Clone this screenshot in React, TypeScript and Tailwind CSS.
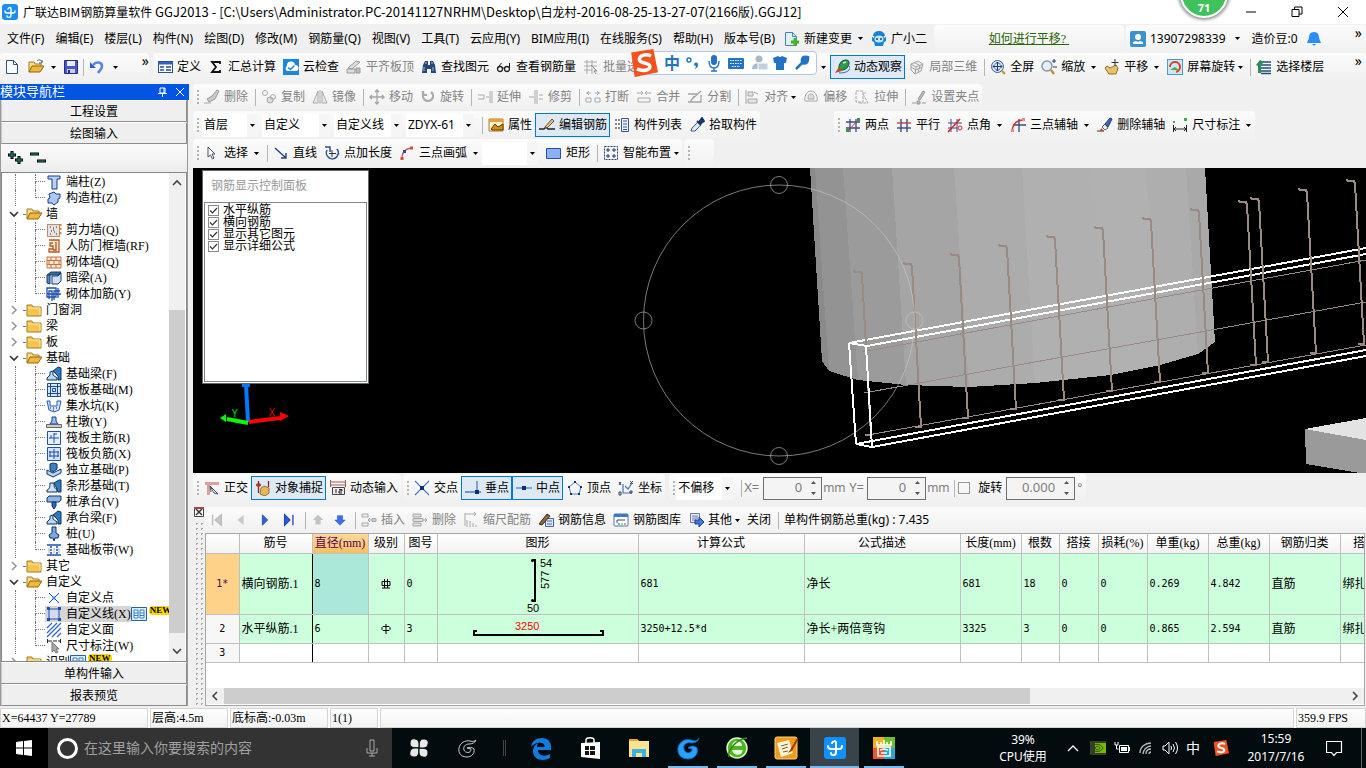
import { ReactNode } from 'react';
import clsx from 'clsx';

const folder = (
  <>
    <path d="M1 3h5l1 2h8v9H1z" fill="#f3c64f" stroke="#a97a1c" />
    <path d="M2 6h12v7" fill="none" stroke="#fdebab" />
  </>
);
const folderOpen = (
  <>
    <path d="M1 13V3h5l1 2h6v3" fill="#f7dc8a" stroke="#a97a1c" />
    <path d="M1 13l3-6h12l-4 6z" fill="#f0b93a" stroke="#8f6412" />
  </>
);

const glyphs: Record<string, ReactNode> = {
  app: (
    <>
      <rect width="16" height="16" rx="3" fill="#1b8ff0" />
      <path
        d="M3 7c0 2 1 2 2 2h6c1 0 2 0 2-2M6 5c1-2 3-2 3 0v6c0 3-4 3-4 1"
        fill="none"
        stroke="#fff"
        strokeWidth="1.4"
        strokeLinecap="round"
      />
    </>
  ),
  newFile: <path d="M2.500 1.500h7l4 4v9h-11zM9.500 1.500v4h4" fill="#fff" stroke="#33517f" />,
  open: (
    <>
      {folderOpen}
      <path d="M9 2c2-2 4-1 5 1M14 1v3h-3" fill="none" stroke="#4a5f80" />
    </>
  ),
  folder,
  folderOpen,
  save: (
    <>
      <path d="M1.500 1.500h13v13h-13z" fill="#4a56c4" stroke="#262f85" />
      <path d="M4 2h8v5H4z" fill="#e9edff" />
      <path d="M4 10h8v4H4z" fill="#c9cfe8" />
      <path d="M5 11h2v3H5z" fill="#262f85" />
    </>
  ),
  undo: (
    <>
      <path d="M1 3v6h6z" fill="#2f5fd0" />
      <path d="M4 6c3-4 9-3 9 1 0 3-2 4-4 7" fill="none" stroke="#5b86e0" strokeWidth="2.600" />
    </>
  ),
  define: (
    <>
      <rect x="1.500" y="2.500" width="14" height="11" fill="#fff" stroke="#2b4f8e" />
      <path d="M1 3h15v2.500H1z" fill="#2f63c0" />
      <path d="M3 8h4M3 11h4M9 8h5M9 11h5" stroke="#2b4f8e" strokeWidth="1.500" />
    </>
  ),
  sigma: <path d="M12 5V3H4l4 5-4 5h8v-2" fill="none" stroke="#111" strokeWidth="1.800" />,
  cloud: (
    <>
      <rect width="16" height="16" fill="#1b87dc" />
      <path d="M4 12a3 3 0 0 1 0-5 4 4 0 0 1 8-1 3 3 0 0 1 1 6z" fill="#fff" />
      <path d="M5 8.500l2.500 2 4-4" fill="none" stroke="#1b87dc" strokeWidth="1.500" />
    </>
  ),
  alignTop: (
    <>
      <path d="M2 9l8-7 4 1-8 7zM1 10h8v4H1z" fill="#ddd" stroke="#9a9a9a" />
      <path d="M10 9h4v5h-4z" fill="#bbb" stroke="#999" />
    </>
  ),
  binoc: (
    <>
      <path d="M2 6l2-4h3v4h2V2h3l2 4 1 8h-5v-4H6v4H1z" fill="#27467c" />
      <path d="M3 8v4M12 8v4M5 3v2M11 3v2" stroke="#9dbbe8" />
    </>
  ),
  glasses: (
    <>
      <circle cx="4" cy="10" r="2.500" fill="none" stroke="#222" strokeWidth="1.300" />
      <circle cx="11" cy="10" r="2.500" fill="none" stroke="#222" strokeWidth="1.300" />
      <path d="M1.500 9l4-5M13.500 10V4M6 9h3" stroke="#222" fill="none" />
    </>
  ),
  gridPick: (
    <>
      <path d="M1 3h13M1 7h13M1 11h8M4 1v14M9 1v14" stroke="#aaa" />
      <path d="M8 6l6 6h-3l2 3" stroke="#888" fill="#eee" />
    </>
  ),
  orbit: (
    <>
      <ellipse cx="10" cy="6" rx="6" ry="4" transform="rotate(-45 10 6)" fill="#2f9a4a" stroke="#12602a" />
      <path d="M9 4l3-1" stroke="#c6f5cc" strokeWidth="1.500" />
      <path d="M1 14l4-6 3 4z" fill="#c2452c" />
      <path d="M5 14a10 5 0 0 0 10-7" fill="none" stroke="#3068c8" />
    </>
  ),
  cube: <path d="M2 5l7-3 5 3-2 7-6 3-4-4zM2 5l5 3 7-3M7 8l-1 7M5 3.500l6 3-2 7M2 8l5 3 6-3" fill="#eee" stroke="#a3a3a3" />,
  fullView: (
    <>
      <circle cx="7.500" cy="7.500" r="6" fill="#dce8f8" stroke="#3d5f96" />
      <path d="M3 7.500h9M7.500 3v9M5 5.500L3 7.500l2 2M10 5.500l2 2-2 2M5.500 5l2-2 2 2M5.500 10l2 2 2-2" fill="none" stroke="#1e3c77" />
      <path d="M12 12l3 3" stroke="#c98d25" strokeWidth="2" />
    </>
  ),
  zoom: (
    <>
      <circle cx="6" cy="7" r="5" fill="#e7effa" stroke="#8595ad" strokeWidth="1.400" />
      <path d="M10 11l3 4" stroke="#c98d25" strokeWidth="2.400" />
      <path d="M11 2h4M13 0v4M12 8h4" stroke="#1e3c77" />
    </>
  ),
  hand: (
    <>
      <path d="M1 9l2-2 3 2 6-3 2 3-2 6H5z" fill="#e9c06b" stroke="#97702a" />
      <path d="M11 0v7M7.500 3.500h7" stroke="#333" />
    </>
  ),
  rotateView: (
    <>
      <rect x=".500" y=".500" width="15" height="15" fill="#cbe8f5" stroke="#4d9cc4" />
      <path d="M3 8a5 5 0 1 1 6 5" fill="none" stroke="#e03a2d" strokeWidth="2" />
      <path d="M3 11l5-3 4 3z" fill="#5aa83a" />
    </>
  ),
  floors: (
    <>
      <path d="M3 3h12M5 6h10M5 9h10M5 12h10M5 14.500h10" stroke="#1f4f7c" strokeWidth="1.400" />
      <path d="M0 6l4-5 4 2-3 3v8H2V7z" fill="#2c8b57" />
    </>
  ),
  brush: (
    <>
      <path d="M0 14h7" stroke="#aaa" />
      <path d="M5 13L3 10l5-3 5-6 2 1-4 8z" fill="#c9c9c9" stroke="#9b9b9b" />
    </>
  ),
  copy: (
    <>
      <circle cx="4" cy="4" r="2.500" fill="none" stroke="#aaa" />
      <circle cx="9" cy="11" r="3" fill="#ddd" stroke="#a5a5a5" />
      <circle cx="12" cy="8" r="2.500" fill="none" stroke="#aaa" />
    </>
  ),
  mirror: <path d="M6 2v12H1zM10 2v12h5zM8 1v14" fill="#e9e9e9" stroke="#aaa" />,
  move: <path d="M8 1v14M1 8h14M6 3l2-2 2 2M6 13l2 2 2-2M3 6L1 8l2 2M13 6l2 2-2 2" fill="none" stroke="#a5a5a5" strokeWidth="1.300" />,
  rotate: <path d="M4 4a5 5 0 1 0 7-1M3 2v4h4" fill="none" stroke="#aaa" strokeWidth="2.200" />,
  extend: <path d="M1 6h6M1 10h6M7 6v4M13 2v12M9 8h3M15 2v12" fill="none" stroke="#aaa" />,
  trim: <path d="M7 1v14M9 1v14M1 8h5M11 6h4M11 10h4" fill="none" stroke="#aaa" />,
  split: <path d="M1 4h5M10 4h5M4 2L2 4l2 2M12 2l2 2-2 2M1 9h5v4H1zM10 9h5v4h-5z" fill="none" stroke="#aaa" />,
  merge: <path d="M1 4h5M10 4h5M5 2l2 2-2 2M11 2L9 4l2 2M2 9h12v4H2z" fill="none" stroke="#aaa" />,
  cut: <path d="M1 5h9M1 13h13V6M4 11l10-9M3 13L7 7" fill="none" stroke="#a5a5a5" strokeWidth="1.300" />,
  align: <path d="M2 1v14M4 3h5v4H4zM4 10h9v4H4zM10 3l4 2" fill="#e4e4e4" stroke="#a5a5a5" />,
  offset: (
    <>
      <path d="M8 2c5 0 7 7 6 10H2C1 9 3 2 8 2z" fill="none" stroke="#a5a5a5" />
      <path d="M8 5c3 0 3 3 3 5H5c0-2 0-5 3-5z" fill="#ddd" stroke="#a5a5a5" />
    </>
  ),
  stretch: <path d="M2 2h7v11H2zM9 5l5 9H4M11 3v2" fill="none" stroke="#aaa" strokeDasharray="3 1" />,
  grip: <path d="M1 14h4M11 14h4M6 12h3v3H6zM7 10l5-8 2 1-5 8z" fill="#bbb" stroke="#999" />,
  props: (
    <>
      <path d="M1 2h14v12H1z" fill="#fff4cf" stroke="#b27a1f" />
      <path d="M1 2h14v3H1z" fill="#e7a13a" />
      <path d="M3 12l4-5 3 3 5-3v6H4z" fill="#d98c1a" stroke="#5a3a08" />
    </>
  ),
  editBar: (
    <>
      <path d="M0 12h5l2-2 2 2h7" fill="none" stroke="#223" strokeWidth="1.500" />
      <path d="M6 10l7-8 2 2-7 7z" fill="#e2c08b" stroke="#735324" />
    </>
  ),
  compList: (
    <>
      <path d="M7.500 1.500h7v13h-7z" fill="#eef3fb" stroke="#365a96" />
      <path d="M9 4h4M9 7h4M9 10h4M9 12.500h4" stroke="#365a96" />
      <path d="M1 3h2M4 3h2M1 7h2M4 7h2M1 11h2M4 11h2" stroke="#888" strokeWidth="2" />
    </>
  ),
  dropper: (
    <>
      <path d="M2 14l1-3 6-6 3 3-6 6z" fill="#dceaf8" stroke="#46607e" />
      <path d="M8 4l4 4M10 5l3-4 2 3-4 3z" stroke="#16325f" fill="#1d4686" strokeWidth="1.800" />
    </>
  ),
  twoPt: (
    <>
      <path d="M5 2v13M11 2v13M1 5h14M1 11h14" stroke="#3b4a86" strokeWidth="1.300" />
      <path d="M3 14L13 3" stroke="#c0392b" />
      <path d="M12 1h3v3h-3zM1 12h3v3H1z" fill="#2d9d3c" />
    </>
  ),
  parallel: (
    <>
      <path d="M5 2v13M11 2v13" stroke="#3b4a86" strokeWidth="1.400" />
      <path d="M1 6h14" stroke="#b44" strokeWidth="1.400" />
      <path d="M1 11h14" stroke="#3b4a86" strokeWidth="1.400" />
    </>
  ),
  ptAngle: (
    <>
      <path d="M4 2v13M10 2v13M1 6h14M1 11h9" stroke="#3b4a86" />
      <path d="M1 15L13 2" stroke="#d22" strokeWidth="1.500" />
      <circle cx="13" cy="11" r="2" stroke="#d22" fill="none" />
    </>
  ),
  arcAxis: (
    <>
      <path d="M9 2v13M3 8h13" stroke="#3b4a86" strokeWidth="1.300" />
      <path d="M2 14C3 6 7 3 13 3" stroke="#c33" strokeWidth="1.500" fill="none" />
      <path d="M1 12h3v3H1zM12 1h3v3h-3z" fill="#e88" />
    </>
  ),
  eraser: (
    <>
      <path d="M0 14h7" stroke="#333" />
      <path d="M5 10l3 3 3-2-3-4z" fill="#e9edf5" stroke="#667" />
      <path d="M8 7l5-6 2 1-4 8z" fill="#3c64c0" stroke="#223b7a" />
      <path d="M4 11l3 3-4 0z" fill="#c0453a" />
    </>
  ),
  dim: (
    <>
      <path d="M1.500 8v7M14.500 8v7M2 12h12M4 10l-2 2 2 2M12 10l2 2-2 2" stroke="#222" fill="none" />
      <path d="M1 4h2v2H1zM12 1h3v3h-3z" fill="#3fae49" />
    </>
  ),
  arrow: <path d="M4 2v10l2.500-2 2 4 1.500-1-2-4h3z" fill="#fff" stroke="#42526e" />,
  line: <path d="M2 3l11 10M13 8v5H8" fill="none" stroke="#23457f" strokeWidth="1.400" />,
  addLen: (
    <>
      <path d="M3 5a6 6 0 1 0 10-1M1 2h5v5M13 10l2-2" fill="none" stroke="#2b4f8e" strokeWidth="1.500" />
      <path d="M8 5v7M5 8.500h7" stroke="#333" />
    </>
  ),
  arc: (
    <>
      <path d="M3 13C3 7 6 4 12 3" stroke="#c4564a" fill="none" strokeWidth="1.300" />
      <path d="M1.500 12h3v3h-3zM11 1.500h3v3h-3z" fill="#d84c3a" />
      <path d="M4 5h3v3H4z" fill="#2b4f8e" />
    </>
  ),
  rect: <path d="M.500 3.500h14v10H.500z" fill="#8bb0f5" stroke="#2b4fa0" />,
  smart: (
    <>
      <rect x="1.500" y="1.500" width="13" height="13" fill="none" stroke="#2b3f6e" strokeDasharray="2 1" />
      <path d="M5 3v4M3 5h4M11 3v4M9 5h4M5 9v4M3 11h4M11 9v4M9 11h4" stroke="#1e3c77" />
    </>
  ),
  ortho: (
    <>
      <path d="M1 2h14v3H6v10H3V5H1z" fill="#dba09c" />
      <path d="M6 6l8 8-4-1zM6 6l1 6" fill="#fff" stroke="#456" />
    </>
  ),
  snap: (
    <>
      <path d="M3.500 1v12M13.500 1v6M1 5h5" stroke="#7c2b22" strokeWidth="1.300" />
      <path d="M6 8l3-2 5 2v5l-4 3-5-2z" fill="#e5b95b" stroke="#97702a" />
      <circle cx="3.500" cy="5" r="2" fill="#a2392b" />
    </>
  ),
  dynIn: (
    <>
      <path d="M0 2h16M0 5h16M.500 0v7M15.500 0v7" stroke="#a2605a" strokeWidth="1.200" />
      <path d="M2.500 7.500h12v7h-12z" fill="#eee" stroke="#444" />
      <path d="M6 9v4M9 9.500h3v1.500H9v2h3" stroke="#222" fill="none" />
    </>
  ),
  cross: (
    <>
      <path d="M1 1l14 14M15 1L1 15" stroke="#4a7fc4" strokeWidth="1.200" />
      <path d="M6 6h4v4H6z" fill="#12306b" />
    </>
  ),
  perp: (
    <>
      <path d="M12 1v10M0 12h16" stroke="#4a7fc4" strokeWidth="1.300" />
      <path d="M10 10h4v4h-4z" fill="#12306b" />
    </>
  ),
  mid: (
    <>
      <path d="M0 8h16" stroke="#4a7fc4" strokeWidth="1.300" />
      <path d="M6 6h4v4H6z" fill="#12306b" />
    </>
  ),
  vertex: (
    <>
      <path d="M8 2l6 5-2 7H4L2 7z" fill="none" stroke="#4a7fc4" />
      <path d="M7 1h2v2H7zM1 6h2v2H1zM13 6h2v2h-2zM3 13h2v2H3zM11 13h2v2h-2z" fill="#12306b" />
    </>
  ),
  coord: (
    <>
      <path d="M5 4v9h9M7 6l3 3 4-6" fill="none" stroke="#3f73b8" strokeWidth="1.200" />
      <path d="M1 2l2 3M3 2L1 5M12 1l3 3M15 1l-3 3M1 12h2v3H1zM12 11h2v2h-2z" stroke="#345" fill="none" />
    </>
  ),
  first: <path d="M3 2v12M13 2L6 8l7 6z" fill="#c9c9c9" stroke="#bbb" strokeWidth="1.500" />,
  prev: <path d="M11 2L4 8l7 6z" fill="#c9c9c9" />,
  next: <path d="M5 2l6 6-6 6z" fill="#2e62dd" stroke="#1d49b5" />,
  last: <path d="M3 2l6 6-6 6zM12.500 2v12" fill="#2e62dd" stroke="#1d49b5" strokeWidth="1.500" />,
  up: <path d="M8 2l6 6h-3v5H5V8H2z" fill="#c3c3c3" />,
  down: <path d="M8 14l6-6h-3V3H5v5H2z" fill="#3a6fe8" stroke="#1d49b5" strokeWidth=".500" />,
  insert: <path d="M1 2h6v3H1zM1 11h6v3H1zM15 8H7M9 6L7 8l2 2M11 6.500h4v3h-4z" fill="#eee" stroke="#a8a8a8" />,
  remove: <path d="M1 2h8v3H1zM1 6.500h10v3H1zM1 11h8v3H1zM11 8h4M13 6l2 2-2 2" fill="#ddd" stroke="#a8a8a8" />,
  scale: <path d="M2 1v13M2 2h11M11 0l2 2-2 2M4 8v7M7 9v6M10 11v4M13 13v2" fill="none" stroke="#aaa" />,
  barInfo: (
    <>
      <path d="M7.500 6.500h8v8h-8zM9 9h5M9 12h5" fill="#dfe8f8" stroke="#44659c" />
      <path d="M1 12l8-10 3 2-8 9z" fill="#8c6b42" stroke="#3a2a14" />
    </>
  ),
  barLib: (
    <>
      <rect x="1" y="2" width="14" height="12" rx="1" fill="#fff" stroke="#4477b8" />
      <path d="M1 3.500h14" stroke="#3d78c8" strokeWidth="3" />
      <path d="M4 11V8h8M5 12h2" stroke="#446" fill="none" />
      <path d="M8 12h2" stroke="#3a3" />
      <path d="M11 12h2" stroke="#d33" />
    </>
  ),
  other: (
    <>
      <path d="M2.500 1.500h9v9h-9zM4 4h6M4 6h6M4 8h4" fill="#eef" stroke="#667a99" />
      <path d="M7 8h4V5l5 5-5 5v-3H7z" fill="#3c76e0" stroke="#1d3f90" />
    </>
  ),
  change: (
    <>
      <path d="M1.500 1.500h7l4 4v9h-11zM8.500 1.500v4h4" fill="#dff0fb" stroke="#3c86b5" />
      <path d="M9.500 7h3v2.500H15v3h-2.500V15h-3v-2.500H7v-3h2.500z" fill="#46b51f" />
    </>
  ),
  bot: (
    <>
      <path d="M1 6l2 1a5 5 0 0 1 10 0l2-1v4l-2 1-1 4H4l-1-4-2-1z" fill="#1583d8" />
      <path d="M2 5a6 5 0 0 1 12 0z" fill="#1583d8" />
      <ellipse cx="8" cy="8" rx="4.500" ry="3.500" fill="#bfe6fb" />
      <path d="M6 7v2M10 7v2" stroke="#0b3a68" strokeWidth="1.400" />
    </>
  ),
  user: (
    <>
      <rect width="16" height="16" rx="2" fill="#3a93cf" />
      <circle cx="8" cy="6" r="3" fill="#fff" />
      <path d="M3 13v-2l3-1 2 1 2-1 3 1v2z" fill="#fff" />
    </>
  ),
  bell: <path d="M8 1c4 0 5 3 5 6l2 5H1l2-5c0-3 1-6 5-6zM6 13h4l-2 2z" fill="#2c8df6" />,
  // tree icons
  column: <path d="M2 2h12v3h-3v10H6V5H2z" fill="#b7d2f5" stroke="#123f8a" />,
  structCol: <path d="M3 4l5-2 2 2h4v4l-2 1v3l-4 3-2-2H2V9l2-1z" fill="#a9c8f2" stroke="#123f8a" />,
  shear: (
    <>
      <rect x="1.500" y="2.500" width="12" height="12" fill="#e5e2df" stroke="#c08a6e" />
      <path d="M4 5h1M7 6h1M10 5h1M5 9h1M8 10h1M4 12h1M10 12h1M7 8h1" stroke="#333" />
      <path d="M14.500 2v12" stroke="#d9822b" strokeDasharray="2 2" strokeWidth="2" />
    </>
  ),
  door: <path d="M3 2h10v12H3v-3h4V8H4V5h3M10 4v8H7" fill="#fde5d5" stroke="#b5581e" strokeWidth="1.300" />,
  brick: <path d="M1 3h14v11H1zM1 6.500h14M1 10.500h14M5 3v3.500M10 3v3.500M3 7v3.500M8 7v3.500M13 7v3.500M5 11v3M10 11v3" fill="#fbe9dc" stroke="#c9713a" />,
  hidden: (
    <>
      <path d="M1 5l4-3h10l-3 3z" fill="#3d6aa3" stroke="#123f6e" />
      <path d="M1 5h3v9l-3-1z" fill="#5d86ba" stroke="#123f6e" />
      <path d="M6 6h6l3-3v8l-3 3H6z" fill="#cfe0f5" stroke="#123f6e" />
    </>
  ),
  brickBar: <path d="M1 2h9v9H1zM3 13V5h3v10M8 14V5h6M1 8h14M12 2v10" fill="none" stroke="#1d4fb5" strokeWidth="1.300" />,
  fdBeam: (
    <>
      <path d="M7 5l5-4 3 1v12h-3v-4z" fill="#2f79bd" stroke="#0c3566" />
      <path d="M1 14v-2l3-3V6l3-1v4l4 3v2z" fill="#b9d6f2" stroke="#0c3566" />
    </>
  ),
  raft: <path d="M1.500 1.500h13v13h-13zM4.500 1.500v13M11.500 1.500v13M1.500 4.500h13M1.500 11.500h13M6.500 6.500h3v3h-3z" fill="#d7e7fb" stroke="#1a4a9e" />,
  pit: (
    <>
      <path d="M1 3h3v5h7V3h4l-2 9-5 2-5-2z" fill="#d4e4fa" stroke="#1d5cc0" />
      <path d="M4 10h1M7 12h1M10 10h1M7 10h1" stroke="#123" />
    </>
  ),
  pier: (
    <>
      <path d="M6 3h4v4l2 3H4l2-3z" fill="#9dbcea" stroke="#123f8a" />
      <path d="M.500 10.500h15v3H.500z" fill="#ccc" stroke="#666" />
    </>
  ),
  raftMain: <path d="M1.500 1.500h13v13h-13zM8 3v10M3 8h10M8 4h3M5 8V5" fill="#e6f0fd" stroke="#1d4fb5" />,
  raftNeg: <path d="M1.500 1.500h13v13h-13zM8 3v10M4 5v6M12 5v6M3 6h10M3 10h10" fill="#d6e5fb" stroke="#1d4fb5" />,
  single: (
    <>
      <path d="M1 8l6 3 8-4v4l-8 4-6-3z" fill="#b9d6f2" stroke="#0c3566" />
      <path d="M4 8V2l3-1 4 1v5l-4 3z" fill="#3d7fbf" stroke="#0c3566" />
    </>
  ),
  strip: (
    <>
      <path d="M8 5l5-3h2v12h-3l-2-5z" fill="#2f79bd" stroke="#0c3566" />
      <path d="M1 14v-2c3-1 3-4 3-7h4c0 3 0 5 3 7v2z" fill="#cfe2f7" stroke="#0c3566" />
    </>
  ),
  cap: (
    <>
      <path d="M1 4l2-2h12v4l-2 2H1z" fill="#8db5e6" stroke="#0c3566" />
      <path d="M6 8h4v4l-2 3-2-3z" fill="#2f69b0" stroke="#0c3566" />
    </>
  ),
  pile: <path d="M6 1h4v6l3 2-1 3H9l-1 3-1-3H4l-1-3 3-2z" fill="#7aa8dd" stroke="#0c3566" />,
  slabStrip: (
    <>
      <path d="M1 3h14M1 13h14" stroke="#1d4fb5" strokeWidth="1.500" />
      <path d="M5 4v8M11 4v8" stroke="#1d4fb5" strokeDasharray="2 1" strokeWidth="1.500" />
      <path d="M3 6v5M8 6v5M13 6v5" stroke="#8fb0e6" />
    </>
  ),
  custPt: (
    <>
      <path d="M3 3l10 10M13 3L3 13" stroke="#1a4a9e" />
      <path d="M6.500 6.500h3v3h-3z" fill="#2c8df6" />
    </>
  ),
  custLn: (
    <>
      <path d="M3 3h10v10H3z" fill="#d4dae8" stroke="#1d4fb5" />
      <path d="M1 1h3v3H1zM12 1h3v3h-3zM1 12h3v3H1zM12 12h3v3h-3z" fill="#1d4fb5" />
    </>
  ),
  custFc: <path d="M1 6l5-5M1 11L11 1M1 15L15 1M6 15l9-9M11 15l4-4" stroke="#2b62d0" strokeWidth="1.200" />,
  custDim: (
    <>
      <path d="M1.500 1v5M14.500 1v5M2 3h12" stroke="#222" strokeDasharray="4 1" />
      <path d="M6 4v10l2-2 2 3 2-1-2-3h3z" fill="#aaa" stroke="#777" />
    </>
  ),
  book: (
    <>
      <path d="M.500 1.500h15v13H.500z" fill="#d8efff" stroke="#2c5ea0" />
      <path d="M3 4h4v8H3zM9 4h4v8H9zM3 7h4M9 7h4M3 9.500h4M9 9.500h4" fill="#fff" stroke="#2c7ed0" />
    </>
  )
};

function Icon({ name, className }: { name: string; className?: string }) {
  return (
    <svg viewBox="0 0 16 16" className={clsx('shrink-0', className ?? 'size-4')} aria-hidden="true">
      {glyphs[name]}
    </svg>
  );
}

function Caret({ className }: { className?: string }) {
  return (
    <svg viewBox="0 0 5 3" className={clsx('h-[3px] w-[5px] shrink-0', className)} aria-hidden="true">
      <path d="M0 0h5L2.500 3z" fill="#000" />
    </svg>
  );
}

type ToolProps = { icon?: string; label: string; off?: boolean; on?: boolean; menu?: 'near' | 'far' };

function Tool({ icon, label, off, on, menu }: ToolProps) {
  return (
    <button
      disabled={off}
      className={clsx(
        'flex h-6 shrink-0 items-center gap-1 border pl-[3px] pr-[2px] whitespace-nowrap',
        on ? 'border-[#0078d7] bg-[#dde9f5]' : 'border-transparent',
        off && 'text-[#838383]'
      )}
    >
      {icon && <Icon name={icon} />}
      {label}
      {menu && <Caret className={menu === 'far' ? 'ml-[2px] mr-px' : '-ml-px'} />}
    </button>
  );
}

const Sep = () => <span className="ml-1 mr-px h-[17px] w-px shrink-0 bg-[#b5b5b5]" />;

const Grip = () => (
  <span className="ml-1 mr-px h-[15px] w-[2px] shrink-0 bg-[repeating-linear-gradient(#b4b4b4_0_2px,transparent_2px_4px)]" />
);

function Bar({ children, className }: { children: ReactNode; className?: string }) {
  return (
    <div className={clsx('flex items-center rounded-sm bg-linear-to-b from-[#fcfcfc] to-[#f0f0f0]', className)}>
      {children}
    </div>
  );
}

function Combo({ label, value, className }: { label: string; value: string; className: string }) {
  return (
    <span className={clsx('relative mr-1 flex h-[23px] shrink-0 items-center bg-white', className)}>
      <select aria-label={label} className="h-full w-full appearance-none bg-transparent pl-[2px] outline-none">
        <option>{value}</option>
      </select>
      <span className="pointer-events-none absolute inset-y-0 right-0 flex w-[11px] items-center justify-center bg-[#f5f5f5]">
        <Caret />
      </span>
    </span>
  );
}

function Spin({ id, value, className }: { id: string; value: string; className: string }) {
  return (
    <span className={clsx('flex h-[23px] shrink-0 items-center border border-[#6f6f6f] bg-[#f4f4f4]', className)}>
      <input id={id} defaultValue={value} className="w-full min-w-0 pr-1 text-right text-[13px] text-[#7f7f7f] outline-none" />
      <svg viewBox="0 0 5 16" className="mx-[5px] h-4 w-[5px] shrink-0" aria-hidden="true">
        <path d="M0 4h5L2.500 1zM0 12h5L2.500 15z" fill="#555" />
      </svg>
    </span>
  );
}

const menus = [
  '文件(F)', '编辑(E)', '楼层(L)', '构件(N)', '绘图(D)', '修改(M)', '钢筋量(Q)', '视图(V)', '工具(T)',
  '云应用(Y)', 'BIM应用(I)', '在线服务(S)', '帮助(H)', '版本号(B)'
];

function Header() {
  return (
    <header className="shrink-0">
      <div className="flex h-6 items-center bg-white pl-[2px]">
        <Icon name="app" />
        <h1 className="ml-[5px] flex-1 font-['Noto_Sans_CJK_SC',sans-serif] text-[13px] leading-6 whitespace-nowrap">
          <span className="text-xs">广联达BIM钢筋算量软件</span> GGJ2013 - [C:\Users\Administrator.PC-20141127NRHM\Desktop\
          <span className="text-xs">白龙村</span>-2016-08-25-13-27-07(2166<span className="text-xs">版</span>).GGJ12]
        </h1>
        {['M1 6h10', 'M1 3.500h7v7H1zM3.500 3.500V1H11v7H8', 'M1 1l10 10M11 1L1 11'].map((d, i) => (
          <button key={d} aria-label={['最小化', '还原', '关闭'][i]} className="flex w-[46px] justify-center">
            <svg viewBox="0 0 12 12" className="size-3">
              <path d={d} fill="none" stroke="#000" />
            </svg>
          </button>
        ))}
      </div>

      <div className="flex h-[29px] items-center overflow-hidden">
        <nav className="flex shrink-0 items-center gap-[11px] pl-[7px] pr-[5px]">
          {menus.map((m) => (
            <button key={m} className="whitespace-nowrap">
              {m}
            </button>
          ))}
        </nav>
        <Tool icon="change" label="新建变更" menu="far" />
        <Tool icon="bot" label="广小二" />
        <Bar className="ml-1 h-[27px] flex-1 justify-center">
          <a href="#pan" className="font-['Liberation_Serif','Noto_Sans_CJK_SC',serif] text-[#2b6300] underline">
            如何进行平移?&nbsp;
          </a>
        </Bar>
        <Bar className="ml-[2px] h-[27px] w-[240px] shrink-0 gap-1 pl-1">
          <Icon name="user" />
          <span>13907298339</span>
          <Caret className="ml-[5px] mr-2" />
          <span>造价豆:0</span>
          <Icon name="bell" className="ml-1 size-4" />
          <button className="ml-auto pr-1 pb-3 text-sm">»</button>
        </Bar>
      </div>

      <div className="mb-[3px] flex h-7 items-center overflow-hidden">
        <Bar className="h-7 w-[149px] shrink-0 pl-1">
          <Icon name="newFile" />
          <Icon name="open" className="ml-2 size-4" />
          <Caret className="mx-[7px]" />
          <Icon name="save" />
          <Sep />
          <Icon name="undo" className="ml-1 size-4" />
          <Caret className="ml-2" />
          <button className="ml-auto pb-3 text-sm">»</button>
        </Bar>
        <Bar className="ml-1 h-7 flex-1">
          <Tool icon="define" label="定义" />
          <Tool icon="sigma" label="汇总计算" />
          <Tool icon="cloud" label="云检查" />
          <Tool icon="alignTop" label="平齐板顶" off />
          <Tool icon="binoc" label="查找图元" />
          <Tool icon="glasses" label="查看钢筋量" />
          <Tool icon="gridPick" label="批量选" off />
          <span className="mr-1 ml-[179px]">
            <Caret />
          </span>
          <Tool icon="orbit" label="动态观察" on />
          <Tool icon="cube" label="局部三维" off />
          <Sep />
          <Tool icon="fullView" label="全屏" />
          <Tool icon="zoom" label="缩放" menu="far" />
          <Tool icon="hand" label="平移" menu="far" />
          <Tool icon="rotateView" label="屏幕旋转" menu="near" />
          <Sep />
          <Tool icon="floors" label="选择楼层" />
          <button className="ml-auto pr-1 pb-3 text-sm">»</button>
        </Bar>
      </div>
    </header>
  );
}

function DrawBars() {
  return (
    <div className="shrink-0">
      <div className="flex h-[26px]">
        <Bar>
          <Grip />
          <Tool icon="brush" label="删除" off />
          <Sep />
          <Tool icon="copy" label="复制" off />
          <Tool icon="mirror" label="镜像" off />
          <Sep />
          <Tool icon="move" label="移动" off />
          <Tool icon="rotate" label="旋转" off />
          <Sep />
          <Tool icon="extend" label="延伸" off />
          <Tool icon="trim" label="修剪" off />
          <Sep />
          <Tool icon="split" label="打断" off />
          <Tool icon="merge" label="合并" off />
          <Tool icon="cut" label="分割" off />
          <Sep />
          <Tool icon="align" label="对齐" off menu="near" />
          <Tool icon="offset" label="偏移" off />
          <Tool icon="stretch" label="拉伸" off />
          <Sep />
          <Tool icon="grip" label="设置夹点" off />
        </Bar>
      </div>
      <div className="flex h-[29px] pt-px">
        <Bar>
          <Grip />
          <div className="flex pl-[2px]">
            <Combo label="楼层" value="首层" className="w-[56px]" />
            <Combo label="类型" value="自定义" className="w-[68px]" />
            <Combo label="构件类型" value="自定义线" className="w-[68px]" />
            <Combo label="构件" value="ZDYX-61" className="w-[68px]" />
          </div>
          <Sep />
          <Tool icon="props" label="属性" />
          <Tool icon="editBar" label="编辑钢筋" on />
          <Tool icon="compList" label="构件列表" />
          <Tool icon="dropper" label="拾取构件" />
        </Bar>
        <Bar className="ml-[74px]">
          <Grip />
          <Tool icon="twoPt" label="两点" />
          <Tool icon="parallel" label="平行" />
          <Tool icon="ptAngle" label="点角" menu="far" />
          <Tool icon="arcAxis" label="三点辅轴" menu="far" />
          <Tool icon="eraser" label="删除辅轴" />
          <Tool icon="dim" label="尺寸标注" menu="far" />
        </Bar>
      </div>
      <div className="flex h-[29px] pb-px">
        <Bar>
          <Grip />
          <Tool icon="arrow" label="选择" menu="far" />
          <Sep />
          <Tool icon="line" label="直线" />
          <Tool icon="addLen" label="点加长度" />
          <Tool icon="arc" label="三点画弧" menu="far" />
          <Combo label="参数" value="" className="w-[56px]" />
          <Tool icon="rect" label="矩形" />
          <Sep />
          <Tool icon="smart" label="智能布置" menu="near" />
        </Bar>
        <Bar className="ml-[2px] w-[30px]">
          <Grip />
        </Bar>
      </div>
    </div>
  );
}

type Node = { t: string; icon?: string; open?: boolean; kids?: [string, string][] };

const tree: Node[] = [
  {
    t: '墙',
    open: true,
    kids: [
      ['shear', '剪力墙(Q)'], ['door', '人防门框墙(RF)'], ['brick', '砌体墙(Q)'], ['hidden', '暗梁(A)'],
      ['brickBar', '砌体加筋(Y)']
    ]
  },
  { t: '门窗洞' },
  { t: '梁' },
  { t: '板' },
  {
    t: '基础',
    open: true,
    kids: [
      ['fdBeam', '基础梁(F)'], ['raft', '筏板基础(M)'], ['pit', '集水坑(K)'], ['pier', '柱墩(Y)'],
      ['raftMain', '筏板主筋(R)'], ['raftNeg', '筏板负筋(X)'], ['single', '独立基础(P)'], ['strip', '条形基础(T)'],
      ['cap', '桩承台(V)'], ['fdBeam', '承台梁(F)'], ['pile', '桩(U)'], ['slabStrip', '基础板带(W)']
    ]
  },
  { t: '其它' },
  {
    t: '自定义',
    open: true,
    kids: [['custPt', '自定义点'], ['custLn', '自定义线(X)'], ['custFc', '自定义面'], ['custDim', '尺寸标注(W)']]
  }
];

const NewTag = () => (
  <>
    <Icon name="book" />
    <span className="-mt-2 ml-[2px] rounded-sm bg-[#ffd800] px-px text-[9px] leading-[9px] font-bold">NEW</span>
  </>
);

function Leaf({ icon, label, last }: { icon: string; label: string; last: boolean }) {
  const picked = label === '自定义线(X)';
  return (
    <li className="flex h-4 items-center pl-[13px]">
      <span className="h-4 w-5 shrink-0 border-l border-dotted border-[#777]" />
      <span className="h-4 w-[10px] shrink-0">
        <span className="block h-2 border-b border-l border-dotted border-[#777]" />
        {!last && <span className="block h-2 border-l border-dotted border-[#777]" />}
      </span>
      <span className={clsx('flex shrink-0 items-center gap-1 pl-px', picked && 'bg-[#d5d5d5]')}>
        <Icon name={icon} />
        <span className="leading-4 whitespace-nowrap">{label}</span>
      </span>
      {picked && <NewTag />}
    </li>
  );
}

function Branch({ t, open, kids }: Node) {
  return (
    <li>
      <div className="flex h-4 items-center pl-[7px]">
        <svg viewBox="0 0 10 10" className="size-[10px] shrink-0" aria-hidden="true">
          <path d={open ? 'M1 3l4 4 4-4' : 'M3 1l4 4-4 4'} fill="none" stroke={open ? '#333' : '#999'} strokeWidth="1.600" />
        </svg>
        <span className="ml-1 w-[2px] border-b border-dotted border-[#777]" />
        <Icon name={open ? 'folderOpen' : 'folder'} className="mr-1 ml-px size-4" />
        <span className="leading-4 whitespace-nowrap">{t}</span>
        {t === '识别' && <NewTag />}
      </div>
      {kids && (
        <ul>
          {kids.map(([icon, label], i) => (
            <Leaf key={label} icon={icon} label={label} last={i === kids.length - 1} />
          ))}
        </ul>
      )}
    </li>
  );
}

function NavButton({ children }: { children: ReactNode }) {
  return (
    <button className="h-[22px] shrink-0 border border-t-white border-r-[#8d8d8d] border-b-[#8d8d8d] border-l-[#c8c8c8] bg-[#efefef] pt-px">
      {children}
    </button>
  );
}

function Sidebar() {
  return (
    <aside className="mr-1 mb-[2px] flex w-[189px] shrink-0 flex-col font-['Liberation_Serif','Noto_Sans_CJK_SC',serif]">
      <div className="flex h-4 shrink-0 items-center bg-[#0055e5] text-[13px] text-white">
        <span className="flex-1">模块导航栏</span>
        <svg viewBox="0 0 28 10" className="mr-1 h-[10px] w-7" aria-hidden="true">
          <path d="M3 1h5v5H3zM7 1v5M1 6.500h9M5.500 6v4M19 1l8 8M27 1l-8 8" fill="none" stroke="#fff" />
        </svg>
      </div>
      <div className="mr-px flex min-h-0 flex-1 flex-col border-x border-[#9a9a9a]">
        <NavButton>工程设置</NavButton>
        <NavButton>绘图输入</NavButton>
        <div className="h-7 shrink-0 bg-linear-to-b from-[#fbfbfb] to-[#ececec] pt-[6px] pl-[6px]">
          <svg viewBox="0 0 40 16" className="h-4 w-10" aria-hidden="true">
            <path d="M5 1v8M1 5h8M12 6v8M8 10h8M23 4h9M30 11h9" stroke="#000" strokeWidth="3" />
            <path d="M5 2v6M2 5h6M12 7v6M9 10h6M24 4h7M31 11h7" stroke="#1a9c8c" />
          </svg>
        </div>
        <div className="flex min-h-0 flex-1 border border-[#828790] bg-white pr-px">
          <ul className="min-w-0 flex-1 overflow-hidden pt-px">
            <Leaf icon="column" label="端柱(Z)" last={false} />
            <Leaf icon="structCol" label="构造柱(Z)" last />
            {tree.map((n) => (
              <Branch key={n.t} {...n} />
            ))}
            <Branch t="识别" />
          </ul>
          <div className="flex w-4 shrink-0 flex-col items-center bg-[#f0f0f0]">
            <svg viewBox="0 0 10 10" className="my-[5px] size-[10px]" aria-hidden="true">
              <path d="M1 7l4-4 4 4" fill="none" stroke="#444" strokeWidth="1.600" />
            </svg>
            <div className="flex w-full flex-1 flex-col">
              <span className="flex-[116]" />
              <span className="flex-[322] bg-[#cdcdcd]" />
              <span className="flex-[8]" />
            </div>
            <svg viewBox="0 0 10 10" className="my-[5px] size-[10px]" aria-hidden="true">
              <path d="M1 3l4 4 4-4" fill="none" stroke="#444" strokeWidth="1.600" />
            </svg>
          </div>
        </div>
        <NavButton>单构件输入</NavButton>
        <NavButton>报表预览</NavButton>
      </div>
    </aside>
  );
}

// column facets: [points, fill]
const facets = [
  ['810,168 815,168 829,371 822,361', '#8a8a8a'],
  ['815,168 843,168 858,380 829,371', '#939393'],
  ['843,168 892,168 906,385 858,380', '#9b9b9b'],
  ['892,168 954,168 969,387 906,385', '#a5a5a5'],
  ['954,168 1022,168 1035,383 969,387', '#acacac'],
  ['1022,168 1089,168 1111,375 1035,383', '#b0b0b0'],
  ['1089,168 1146,168 1160,365 1111,375', '#b1b1b1'],
  ['1146,168 1186,168 1198,354 1160,365', '#aeaeae'],
  ['1186,168 1205,168 1215,342 1198,354', '#a9a9a9']
];

const stirrups = [
  [853, 271], [903, 263], [950, 254], [998, 245], [1046, 236], [1094, 227], [1142, 218], [1190, 209],
  [1238, 201], [1250, 198], [1298, 189], [1346, 180]
];

const toggles = ['水平纵筋', '横向钢筋', '显示其它图元', '显示详细公式'];

function Viewport() {
  return (
    <div className="relative min-h-0 flex-1 overflow-hidden bg-black">
      <svg viewBox="193 168 1173 305" preserveAspectRatio="xMinYMin slice" className="block h-full w-full">
        <g fill="none" shapeRendering="crispEdges">
          {facets.map(([points, fill]) => (
            <polygon key={points} points={points} fill={fill} />
          ))}
          <path d="M1305 429l61 -11v22z" fill="#e3e3e3" />
          <path d="M1305 429l61 11v34l-60-10z" fill="#9a9a9a" />
          <path d="M849 343L1366 248M867 346L1366 254M856 444L1366 350M872 447L1366 356" stroke="#fff" strokeWidth="2" />
          <g stroke="#998a83">
            <path d="M862 352L1366 260M864 393L1366 302M868 435L1366 345" />
            {stirrups.map(([x, y]) => (
              <path key={x} d={`M${x} ${y}l3 1 5 0 1 3 9 160h-6`} strokeWidth="2" />
            ))}
          </g>
          <path d="M849 343l18 3M849 343l7 101M866 346l6 101M856 444l16 3" stroke="#fff" strokeWidth="2" />
        </g>
        <g fill="none" stroke="#c9c9c9" strokeOpacity=".600">
          <circle cx="779" cy="320.500" r="135.500" />
          <circle cx="779" cy="185" r="8.500" />
          <circle cx="779" cy="456" r="8.500" />
          <circle cx="643.500" cy="320.500" r="8.500" />
          <circle cx="914.500" cy="320.500" r="8.500" />
        </g>
        <path d="M242 385h8M246 384l2 38" stroke="#0078ff" strokeWidth="4" />
        <path d="M248 423l-21-4" stroke="#0f0" strokeWidth="4" />
        <path d="M220 418l6-4v8z" fill="#0f0" />
        <path d="M249 422l31-4" stroke="#f00" strokeWidth="4" />
        <path d="M289 416l-9-4v9z" fill="#f00" />
        <text x="232" y="417" fontSize="10" fill="#0d0">Y</text>
        <text x="269" y="416" fontSize="10" fill="#e00">X</text>
      </svg>

      <section className="absolute top-[2px] left-[9px] flex h-[214px] w-[167px] flex-col border border-[#666] bg-white">
        <h2 className="h-[31px] shrink-0 pl-2 leading-[30px] text-[#999]">钢筋显示控制面板</h2>
        <div className="mx-px mb-px flex-1 border border-[#828790] pt-px pl-[3px] font-['Liberation_Serif','Noto_Sans_CJK_SC',serif]">
          {toggles.map((t) => (
            <label key={t} className="flex h-3 items-center gap-1 leading-3">
              <span className="relative size-[11px]">
                <input type="checkbox" defaultChecked className="block size-[11px] appearance-none border border-[#8a8a8a] bg-white" />
                <svg viewBox="0 0 11 11" className="pointer-events-none absolute inset-0 size-[11px]">
                  <path d="M2 5.500l2.500 2.500L9 3" fill="none" stroke="#333" strokeWidth="1.200" />
                </svg>
              </span>
              {t}
            </label>
          ))}
        </div>
      </section>
    </div>
  );
}

function SnapBar() {
  return (
    <div className="flex h-[31px] shrink-0 pt-px pb-[2px]">
      <Bar>
        <Grip />
        <Tool icon="ortho" label="正交" />
        <Tool icon="snap" label="对象捕捉" on />
        <Tool icon="dynIn" label="动态输入" />
      </Bar>
      <Bar className="ml-[2px]">
        <Grip />
        <Tool icon="cross" label="交点" />
        <Tool icon="perp" label="垂点" on />
        <Tool icon="mid" label="中点" on />
        <Tool icon="vertex" label="顶点" />
        <Tool icon="coord" label="坐标" />
      </Bar>
      <Bar className="ml-1 pr-1 text-[#7f7f7f]">
        <Grip />
        <span className="text-black">
          <Combo label="偏移方式" value="不偏移" className="w-[57px]" />
        </span>
        <Sep />
        <label htmlFor="dx" className="w-5 pl-px text-[13px]">X=</label>
        <Spin id="dx" value="0" className="w-[59px]" />
        <span className="w-[27px] pl-px">mm</span>
        <label htmlFor="dy" className="w-[18px] text-[13px]">Y=</label>
        <Spin id="dy" value="0" className="w-[59px]" />
        <span className="w-6 pl-px">mm</span>
        <Sep />
        <label className="flex items-center gap-2 pr-1 pl-[2px] text-black">
          <input type="checkbox" className="size-3 appearance-none border border-[#9a9a9a] bg-[#f6f6f6]" />
          旋转
        </label>
        <Spin id="rot" value="0.000" className="w-[69px]" />
        <label htmlFor="rot" className="pl-[2px]">°</label>
      </Bar>
    </div>
  );
}

const cols = [
  { t: '', w: 'w-[33px]' },
  { t: '筋号', w: 'w-[73px]' },
  { t: '直径(mm)', w: 'w-[56px]' },
  { t: '级别', w: 'w-[36px]' },
  { t: '图号', w: 'w-[33px]' },
  { t: '图形', w: 'w-[201px]' },
  { t: '计算公式', w: 'w-[166px]' },
  { t: '公式描述', w: 'w-[156px]' },
  { t: '长度(mm)', w: 'w-[61px]' },
  { t: '根数', w: 'w-[38px]' },
  { t: '搭接', w: 'w-[39px]' },
  { t: '损耗(%)', w: 'w-[49px]' },
  { t: '单重(kg)', w: 'w-[61px]' },
  { t: '总重(kg)', w: 'w-[61px]' },
  { t: '钢筋归类', w: 'w-[71px]' },
  { t: '搭接形式', w: 'w-[74px]' }
];

const stirrupShape = (
  <svg viewBox="0 0 200 60" className="mx-auto block h-[60px] w-[200px] font-['Liberation_Sans',sans-serif] text-[11px]">
    <path d="M94 6h3v41h-3" fill="none" stroke="#000" strokeWidth="2" />
    <circle cx="94.500" cy="6.500" r="1.500" />
    <circle cx="94.500" cy="46.500" r="1.500" />
    <text x="102" y="13">54</text>
    <text x="89" y="58">50</text>
    <text transform="translate(111 35) rotate(-90)">577</text>
  </svg>
);
const barShape = (
  <svg viewBox="0 0 200 28" className="mx-auto block h-7 w-[200px] font-['Liberation_Sans',sans-serif] text-[11px]">
    <path d="M39 16h-3v4h129v-4h-3" fill="none" stroke="#000" strokeWidth="2" />
    <text x="77" y="15" fill="#f00">3250</text>
  </svg>
);
const grade3 = (
  <svg viewBox="0 0 10 12" className="mx-auto size-3" aria-label="三级钢">
    <path d="M1 3.500h8v4H1zM3.500 1v9M6.500 1v9M1 10h8" fill="none" stroke="#000" />
  </svg>
);
const grade1 = (
  <svg viewBox="0 0 10 12" className="mx-auto size-3" aria-label="一级钢">
    <path d="M2 3.500h6l1 1v2l-1 1H2l-1-1v-2zM5 1v10" fill="none" stroke="#000" />
  </svg>
);

const rows: ReactNode[][] = [
  ['横向钢筋.1', '8', grade3, '0', stirrupShape, '681', '净长', '681', '18', '0', '0', '0.269', '4.842', '直筋', '绑扎'],
  ['水平纵筋.1', '6', grade1, '3', barShape, '3250+12.5*d', '净长+两倍弯钩', '3325', '3', '0', '0', '0.865', '2.594', '直筋', '绑扎'],
  Array(15).fill('')
];
const rowHeights = ['h-[61px]', 'h-[29px]', 'h-[19px]'];
const isLatin = (c: ReactNode) => typeof c === 'string' && /^[\x20-\x7e]+$/.test(c);

function BarTable() {
  return (
    <table className="w-[1208px] table-fixed border-collapse font-['Liberation_Serif','Noto_Sans_CJK_SC',serif]">
      <colgroup>
        {cols.map((c, i) => (
          <col key={i} className={c.w} />
        ))}
      </colgroup>
      <thead>
        <tr className="h-[19px]">
          {cols.map((c, i) => (
            <th
              key={i}
              className={clsx(
                'border-r border-b border-[#c0c0c0] p-0 leading-4 font-normal whitespace-nowrap',
                i === 2 ? 'bg-linear-to-b from-[#fbd99a] to-[#f3bf62] text-[#5a0050]' : 'bg-linear-to-b from-white to-[#f2f2f2]'
              )}
            >
              {c.t}
            </th>
          ))}
        </tr>
      </thead>
      <tbody>
        {rows.map((r, y) => (
          <tr key={y} className={clsx(rowHeights[y], y < 2 && 'bg-[#ccffdb]')}>
            <th
              scope="row"
              className={clsx(
                "border-r border-b border-[#c0c0c0] p-0 font-['DejaVu_Sans_Mono',monospace] text-[10px] font-normal",
                y === 0 ? 'bg-[#ffd28a] text-[#5a0050]' : 'bg-[#f7f7f7]'
              )}
            >
              {y === 0 ? '1*' : y + 1}
            </th>
            {r.map((c, x) => (
              <td
                key={x}
                className={clsx(
                  'border-r border-b border-[#c0c0c0] p-0 leading-4 whitespace-nowrap',
                  x === 0 && 'border-r-black',
                  typeof c === 'string' && 'pl-[2px]',
                  isLatin(c) && "font-['DejaVu_Sans_Mono',monospace] text-[10px]",
                  x === 1 && y === 0 && 'bg-[#abe8d9]'
                )}
              >
                {c}
              </td>
            ))}
          </tr>
        ))}
      </tbody>
    </table>
  );
}

function GridPane() {
  return (
    <div className="mt-[3px] mb-[2px] flex shrink-0">
      <div className="flex w-3 shrink-0 flex-col pl-px">
        <button aria-label="关闭面板" className="size-[10px]">
          <svg viewBox="0 0 10 10" className="size-[10px]">
            <path d="M.500 .500h9v9h-9z" fill="#fff" stroke="#444" />
            <path d="M2 2l6 6M8 2L2 8" stroke="#333" strokeWidth="1.500" />
            <path d="M0 1h10" stroke="#a44" strokeWidth="2" />
          </svg>
        </button>
        <span className="mt-1 w-[10px] flex-1 bg-[radial-gradient(#a9a9a9_1px,transparent_1px)] bg-size-[5px_5px]" />
      </div>
      <div className="min-w-0 flex-1">
        <Bar className="h-[26px]">
          {['first', 'prev', 'next', 'last'].map((n) => (
            <button key={n} aria-label={n} className="flex w-6 shrink-0 justify-center">
              <Icon name={n} className="size-[14px]" />
            </button>
          ))}
          <Sep />
          {['up', 'down'].map((n) => (
            <button key={n} aria-label={n} className="flex w-[22px] shrink-0 justify-center">
              <Icon name={n} className="size-[14px]" />
            </button>
          ))}
          <Sep />
          <Tool icon="insert" label="插入" off />
          <Tool icon="remove" label="删除" off />
          <Tool icon="scale" label="缩尺配筋" off />
          <Tool icon="barInfo" label="钢筋信息" />
          <Tool icon="barLib" label="钢筋图库" />
          <Tool icon="other" label="其他" menu="near" />
          <Tool label="关闭" />
          <Sep />
          <span className="ml-1 whitespace-nowrap">单构件钢筋总重(kg) : 7.435</span>
        </Bar>
        <div className="mr-px flex h-[173px] flex-col border border-[#a6a6a6] bg-white">
          <div className="flex-1 overflow-hidden">
            <BarTable />
          </div>
          <div className="mb-px flex h-4 shrink-0 items-center bg-[#f0f0f0]">
            <svg viewBox="0 0 10 10" className="mx-1 size-[10px]" aria-hidden="true">
              <path d="M7 1L3 5l4 4" fill="none" stroke="#444" strokeWidth="1.600" />
            </svg>
            <span className="h-full flex-[806] bg-[#cdcdcd]" />
            <span className="flex-[316]" />
            <svg viewBox="0 0 10 10" className="mx-1 size-[10px]" aria-hidden="true">
              <path d="M3 1l4 4-4 4" fill="none" stroke="#444" strokeWidth="1.600" />
            </svg>
          </div>
        </div>
      </div>
    </div>
  );
}

const status = [
  ['X=64437 Y=27789', 'w-[148px]'],
  ['层高:4.5m', 'w-[78px]'],
  ['底标高:-0.03m', 'w-[98px]'],
  ['1(1)', 'w-[48px]'],
  ['', 'flex-1'],
  ['359.9 FPS', 'w-[70px]']
];

const appIcons: { name: string; run?: boolean; active?: boolean; art: ReactNode }[] = [
  {
    name: 'Edge',
    art: (
      <path
        d="M2 11C3 5 7 2 13 2c6 0 9 4 9 9v3H9c0 6 7 7 12 4v4c-7 4-17 2-17-7 0-4 2-6 5-8-1 2-1 3-1 4h8c0-5-9-6-14 0z"
        fill="#0f7ce0"
      />
    )
  },
  {
    name: '应用商店',
    art: (
      <>
        <path d="M8 7V4c0-3 8-3 8 0v3" fill="none" stroke="#fff" strokeWidth="1.500" />
        <path d="M3 7l19-1v17L3 21z" fill="#fff" />
        <path d="M7 10h4v4H7zM12 10h5v4h-5zM7 15h4v4H7zM12 15h5v4h-5z" fill="#111" />
      </>
    )
  },
  {
    name: '文件资源管理器',
    art: (
      <>
        <path d="M2 3h8l2 2h10v16H2z" fill="#fde28f" />
        <path d="M2 3h8l1 2H2z" fill="#e3a927" />
        <path d="M5 21v-8h14v8h-4v-4H9v4z" fill="#39b2e8" />
      </>
    )
  },
  {
    name: '广联达G',
    run: true,
    art: (
      <path
        d="M23 2c-1 4-4 5-8 5-5-1-8 2-7 6 1 5 8 5 8 0l-4-1c2-2 6-3 9 0 2 6-3 11-9 11C5 23 1 18 2 12S9 2 15 4s6 0 8-2z"
        fill="#2aa0f8"
        stroke="#0864c0"
      />
    )
  },
  {
    name: '浏览器',
    run: true,
    art: (
      <>
        <circle cx="12" cy="12" r="10" fill="#4cb81f" stroke="#dff5d0" strokeWidth="1.500" />
        <path d="M7 10a5 5 0 0 1 10 0zM7 14h11l-2 4c-4 2-8 0-9-4z" fill="#eefbe4" />
        <path d="M4 21C2 14 12 3 22 2" fill="none" stroke="#2d8a0e" strokeWidth="1.500" />
      </>
    )
  },
  {
    name: '便笺',
    run: true,
    art: (
      <>
        <rect x="1" y="1" width="22" height="22" rx="2" fill="#f19a1c" stroke="#ffd37a" />
        <path d="M3 7l12-3 4 13-12 4z" fill="#fff6dc" />
        <path d="M7 10l7-2M8 13l6-2M9 16l5-1" stroke="#8a5a14" />
        <path d="M23 2l-7 12-2 3 4-2 6-11z" fill="#9c3f10" />
      </>
    )
  },
  {
    name: 'GGJ2013',
    run: true,
    active: true,
    art: (
      <>
        <rect x="1" y="1" width="22" height="22" rx="3" fill="#0e90ff" />
        <path
          d="M5 10c0 3 2 3 3 3h8c2 0 3-1 3-3M9 7c1-2 4-3 4 0v9c0 4-5 4-5 1"
          fill="none"
          stroke="#fff"
          strokeWidth="2"
          strokeLinecap="round"
        />
      </>
    )
  },
  {
    name: '造价工具',
    run: true,
    art: (
      <>
        <path d="M1 1h11v11H1z" fill="#f5b11c" />
        <path d="M12 1h11v11H12z" fill="#6cbf2e" />
        <path d="M1 12h11v11H1z" fill="#f0562e" />
        <path d="M12 12h11v11H12z" fill="#2ba6d8" />
        <path d="M5 5v4h14V5M9 6v3M12 4v5M15 6v3M6 11h12v9H6zM8 14l4-1 4 1M9 17h6" fill="none" stroke="#fff" strokeWidth="1.600" />
      </>
    )
  }
];

const sLogo = (
  <>
    <path d="M1 3l19-3 4 20-20 4z" fill="#f4511e" />
    <path d="M18 6c-4-2-10-1-10 3s9 2 9 6-7 4-11 2" fill="none" stroke="#fff" strokeWidth="3" />
  </>
);

function Taskbar() {
  return (
    <footer className="flex h-10 shrink-0 items-stretch bg-[#020b0e] text-white">
      <button aria-label="开始" className="flex w-12 shrink-0 items-center justify-center bg-black">
        <svg viewBox="0 0 16 16" className="size-4">
          <path d="M0 2l7-1v6.500H0zM8 1l8-1v7.500H8zM0 8.500h7V15l-7-1zM8 8.500h8V16l-8-1z" fill="#fff" />
        </svg>
      </button>
      <div className="flex w-[344px] shrink-0 items-center bg-[#333] pr-[14px] pl-[9px]">
        <span className="size-[21px] shrink-0 rounded-full border-[3px] border-white" />
        <input
          aria-label="搜索"
          placeholder="在这里输入你要搜索的内容"
          className="ml-[6px] min-w-0 flex-1 text-sm placeholder-[#a0a0a0] outline-none"
        />
        <svg viewBox="0 0 12 18" className="h-[18px] w-3" aria-hidden="true">
          <path d="M4 1h4v11H4zM1 9v5h10V9M6 14v3M3 17h6" fill="none" stroke="#aaa" />
        </svg>
      </div>
      <div className="flex w-[124px] shrink-0 items-center gap-6 pl-[15px]">
        <svg viewBox="0 0 24 24" className="size-6" aria-hidden="true">
          <path
            d="M12 12C9 12 3 12 3 8s2-6 5-5c3 0 5 4 4 9zM12 12c0-3 0-9 4-9s6 2 5 5c0 3-4 5-9 4zM12 12c3 0 9 0 9 4s-2 6-5 5c-3 0-5-4-4-9zM12 12c0 3 0 9-4 9s-6-2-5-5c0-3 4-5 9-4z"
            fill="#e8e8e8"
            stroke="#020b0e"
          />
        </svg>
        <svg viewBox="0 0 24 24" className="size-6" aria-hidden="true">
          <path
            d="M21 4c-1 3-4 4-7 4-4 0-6 3-5 6s7 4 7-1l-4-1c2-1 5-1 7 1 1 5-3 8-7 8-6 0-9-4-8-9s6-8 11-7c3 1 5 0 6-1z"
            fill="none"
            stroke="#ccc"
          />
        </svg>
        <span className="h-4 w-[3px] border-x border-[#444]" />
      </div>
      {appIcons.map((a) => (
        <button
          key={a.name}
          aria-label={a.name}
          className={clsx('flex w-[49px] shrink-0 flex-col items-center pt-2', a.active && 'bg-[#38444a]')}
        >
          <svg viewBox="0 0 24 24" className="size-6">
            {a.art}
          </svg>
          {a.run && <span className={clsx('mt-auto h-[2px] bg-[#76b9ed]', a.active ? 'w-full' : 'w-10')} />}
        </button>
      ))}
      <div className="ml-auto w-12 shrink-0 pt-[3px] text-center leading-[17px] whitespace-nowrap">
        <p>39%</p>
        <p>CPU使用</p>
      </div>
      <div className="flex shrink-0 items-center gap-2 pl-5">
        <svg viewBox="0 0 12 8" className="h-2 w-3" aria-hidden="true">
          <path d="M1 7l5-5 5 5" fill="none" stroke="#fff" strokeWidth="1.300" />
        </svg>
        <svg viewBox="0 0 16 14" className="ml-[3px] h-[14px] w-4" aria-hidden="true">
          <path d="M0 0h16v14H0z" fill="#333b33" />
          <path d="M5 2h11v10H5z" fill="#76b900" />
          <path d="M1 7c3-5 9-5 12 0-3 5-9 4-12 0zM5 7c1-2 4-2 5 0-1 2-4 2-5 0z" fill="none" stroke="#2c4a00" />
        </svg>
        <svg viewBox="0 0 16 14" className="h-[14px] w-4" aria-hidden="true">
          <path d="M5.500 4.500h9v7h-9zM15.500 6v4M1 1v3h3V1M2.500 4v4h2" fill="none" stroke="#fff" />
          <path d="M7 6h6v4H7z" fill="#fff" />
        </svg>
        <svg viewBox="0 0 16 14" className="h-[14px] w-4" aria-hidden="true">
          <path d="M2 12C2 6 7 2 13 2M5 13c0-4 4-8 8-8M8 13c0-3 2-5 5-5M11 13c0-1 1-2 2-2" fill="none" stroke="#bbb" strokeWidth="1.300" />
        </svg>
        <svg viewBox="0 0 16 14" className="h-[14px] w-4" aria-hidden="true">
          <path d="M1 5h2l4-4v12L3 9H1zM9 5q1 2 0 4M11 3q3 4 0 8M13.500 1q4 6 0 12" fill="none" stroke="#fff" />
        </svg>
        <span className="text-sm">中</span>
        <svg viewBox="0 0 24 24" className="ml-[5px] size-4" aria-hidden="true">
          {sLogo}
        </svg>
      </div>
      <div className="ml-[15px] w-[64px] shrink-0 pt-[2px] text-center leading-[18px]">
        <p>15:59</p>
        <p>2017/7/16</p>
      </div>
      <button aria-label="操作中心" className="ml-[14px] flex w-10 shrink-0 items-center border-r border-[#666] pl-1">
        <svg viewBox="0 0 17 17" className="size-[17px]">
          <path d="M.500 1.500h15v11h-5l-2.500 3-2.500-3h-5z" fill="none" stroke="#fff" strokeWidth="1.200" />
        </svg>
      </button>
      <span className="w-1 shrink-0" />
    </footer>
  );
}

// floating input-method strip
function ImeBar() {
  return (
    <div className="absolute top-[49px] left-[630px] flex h-7 items-center">
      <svg viewBox="0 0 24 24" className="z-10 size-7" aria-hidden="true">
        {sLogo}
      </svg>
      <div className="-mt-px -ml-5 flex h-6 items-center rounded-sm border border-[#b3c9de] bg-white pr-1 pl-[25px] text-[#2273c4]">
        <span className="text-base leading-none font-bold">中</span>
        <svg viewBox="0 0 132 18" className="h-[18px] w-[132px]" aria-hidden="true">
          <circle cx="9" cy="6" r="2" fill="none" stroke="currentColor" strokeWidth="1.400" />
          <path d="M14 10a2 2 0 1 1 4 1q0 3-4 4 2-1 2-3-2 0-2-2z" fill="currentColor" />
          <rect x="31" y="1" width="6" height="10" rx="3" fill="currentColor" />
          <path d="M29 7q0 7 5 7t5-7M34 14v3M31 17h6" fill="none" stroke="currentColor" strokeWidth="1.400" />
          <rect x="48" y="4" width="16" height="11" rx="1" fill="currentColor" />
          <path d="M50 6.500h12M50 9.500h12M52 12.500h8" stroke="#fff" strokeDasharray="1.500 1" />
          <circle cx="79" cy="5" r="3.500" fill="#aab8cc" />
          <path d="M72 15q0-6 7-6t6 6z" fill="#aab8cc" />
          <path d="M78 9h10v7H78z" fill="#c4cfde" stroke="#fff" />
          <path d="M93 4l5-2q2 2 4 0l5 2-1 5h-2v7h-8V9h-2z" fill="currentColor" />
          <path d="M116 15l7-7M122 8q-1-6 5-5l-3 3 1 1 3-2q0 6-6 4" stroke="currentColor" strokeWidth="2.500" fill="currentColor" />
        </svg>
      </div>
    </div>
  );
}

export default function App() {
  return (
    <div className="relative flex h-screen flex-col overflow-hidden bg-[#f0f0f0] font-['Noto_Sans','Noto_Sans_CJK_SC',sans-serif] text-xs text-black">
      <Header />
      <main className="flex min-h-0 flex-1">
        <Sidebar />
        <div className="flex min-w-0 flex-1 flex-col">
          <DrawBars />
          <Viewport />
          <SnapBar />
          <GridPane />
        </div>
      </main>
      <div className="flex h-5 shrink-0 gap-[2px] bg-white font-['Liberation_Serif','Noto_Sans_CJK_SC',serif]">
        {status.map(([text, w]) => (
          <span
            key={text}
            className={clsx('border border-[#d5d5d5] bg-linear-to-b from-white to-[#f2f2f2] pl-px leading-[18px] whitespace-nowrap', w)}
          >
            {text}
          </span>
        ))}
      </div>
      <Taskbar />
      <ImeBar />
      <div className="absolute -top-[30px] right-[138px] flex size-12 items-end justify-center rounded-full border-2 border-white bg-[#3fc15c] pb-px text-[11px] leading-[14px] font-bold text-white shadow-[0_0_3px_2px_#999]">
        71
      </div>
    </div>
  );
}
